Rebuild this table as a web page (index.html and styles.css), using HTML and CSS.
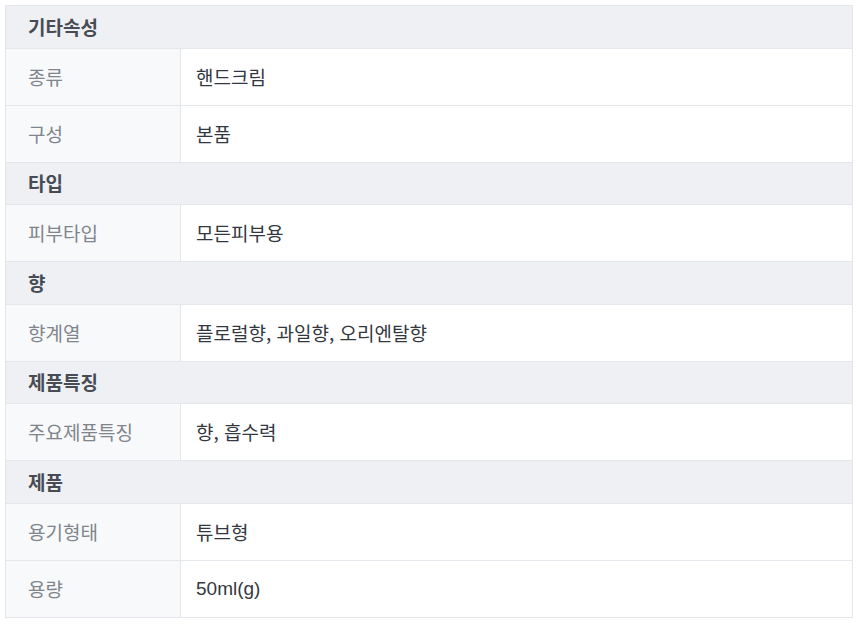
FILE: index.html
```html
<!DOCTYPE html>
<html lang="ko">
<head>
<meta charset="utf-8">
<link rel="stylesheet" href="styles.css">
</head>
<body>
<table class="spec">
  <colgroup>
    <col class="col-label">
    <col class="col-value">
  </colgroup>
  <tbody>
    <tr class="group"><th colspan="2">기타속성</th></tr>
    <tr><td class="label">종류</td><td class="value">핸드크림</td></tr>
    <tr><td class="label">구성</td><td class="value">본품</td></tr>
    <tr class="group"><th colspan="2">타입</th></tr>
    <tr><td class="label">피부타입</td><td class="value">모든피부용</td></tr>
    <tr class="group"><th colspan="2">향</th></tr>
    <tr><td class="label">향계열</td><td class="value">플로럴향, 과일향, 오리엔탈향</td></tr>
    <tr class="group"><th colspan="2">제품특징</th></tr>
    <tr><td class="label">주요제품특징</td><td class="value">향, 흡수력</td></tr>
    <tr class="group"><th colspan="2">제품</th></tr>
    <tr><td class="label">용기형태</td><td class="value">튜브형</td></tr>
    <tr><td class="label">용량</td><td class="value latin">50ml(g)</td></tr>
  </tbody>
</table>
</body>
</html>
```
FILE: styles.css
```css
html, body {
  margin: 0;
  padding: 0;
  background: #ffffff;
}
body {
  padding: 5px 7px 0 5px;
  font-family: "Noto Sans CJK KR", "Noto Sans", sans-serif;
}
.spec {
  width: 848px;
  border-collapse: collapse;
  table-layout: fixed;
  border: 1px solid #e3e6ea;
}
.col-label {
  width: 175px;
}
.spec th,
.spec td {
  border: 1px solid #e3e6ea;
  font-size: 19px;
  line-height: 22px;
  text-align: left;
  vertical-align: middle;
}
.group th {
  height: 42.5px;
  padding: 0 0 0 22px;
  box-sizing: border-box;
  background: #eef0f4;
  color: #474c54;
  font-weight: 700;
}
.label {
  height: 57px;
  box-sizing: border-box;
  padding: 0 0 0 22px;
  background: #f8f9fb;
  color: #80858c;
  font-weight: 400;
}
.value {
  height: 57px;
  box-sizing: border-box;
  padding: 0 0 0 15px;
  background: #ffffff;
  color: #333840;
}
.latin {
  font-family: "Liberation Sans", "Noto Sans CJK KR", sans-serif;
  font-size: 18px;
}
```
